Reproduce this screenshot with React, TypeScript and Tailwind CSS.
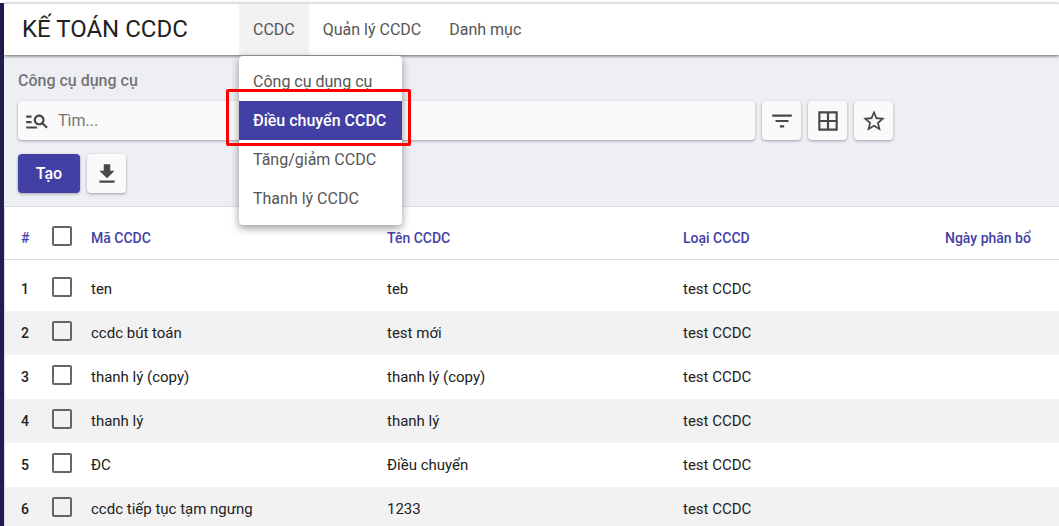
import React from 'react';
import { MdBorderAll, MdDownload, MdFilterList, MdManageSearch, MdStarBorder } from 'react-icons/md';

const menuItems = ['Công cụ dụng cụ', 'Điều chuyển CCDC', 'Tăng/giảm CCDC', 'Thanh lý CCDC'];
const activeItem = 'Điều chuyển CCDC';

const rows = [
  { code: 'ten', name: 'teb', type: 'test CCDC', date: '' },
  { code: 'ccdc bút toán', name: 'test mới', type: 'test CCDC', date: '' },
  { code: 'thanh lý (copy)', name: 'thanh lý (copy)', type: 'test CCDC', date: '' },
  { code: 'thanh lý', name: 'thanh lý', type: 'test CCDC', date: '' },
  { code: 'ĐC', name: 'Điều chuyển', type: 'test CCDC', date: '' },
  { code: 'ccdc tiếp tục tạm ngưng', name: '1233', type: 'test CCDC', date: '' },
];

const raised = 'shadow-[0_1px_3px_rgba(0,0,0,0.35)]';

function Checkbox({ label }: { label: string }) {
  return (
    <input
      type="checkbox"
      aria-label={label}
      className="block size-5 appearance-none rounded-xs border-2 border-[#666] bg-transparent checked:bg-[#4340a5]"
    />
  );
}

function IconButton({ label, children }: { label: string; children: React.ReactNode }) {
  return (
    <button
      type="button"
      aria-label={label}
      className={`flex h-[39px] w-[39px] shrink-0 items-center justify-center rounded bg-[#fafafa] text-[#484848] ${raised}`}
    >
      {children}
    </button>
  );
}

function NavMenu() {
  return (
    <nav className="flex h-full text-base text-[#555]">
      <div className="relative h-full">
        <button type="button" aria-expanded="true" className="h-full bg-[#f2f2f2] px-[14px]">
          CCDC
        </button>
        <ul className="absolute top-full left-0 z-20 mt-px min-w-[163px] rounded bg-white pt-[6px] pb-[7px] whitespace-nowrap shadow-[0_3px_8px_rgba(0,0,0,0.4)]">
          {menuItems.map((item) =>
            item === activeItem ? (
              <li key={item} className="relative">
                <a href="#dieu-chuyen" className="flex h-[39px] items-center bg-[#4340a5] px-[14px] font-medium text-white">
                  {item}
                </a>
                <span className="pointer-events-none absolute -top-3 -right-[9px] -bottom-[6px] -left-[13px] rounded-xs border-3 border-[#ff0000]" />
              </li>
            ) : (
              <li key={item}>
                <a href="#menu" className="flex h-[39px] items-center px-[14px]">
                  {item}
                </a>
              </li>
            ),
          )}
        </ul>
      </div>
      <button type="button" className="h-full px-[14px]">Quản lý CCDC</button>
      <button type="button" className="h-full px-[14px]">Danh mục</button>
    </nav>
  );
}

export default function App() {
  return (
    <div className="flex h-screen flex-col overflow-hidden bg-white pt-[3px] font-[Roboto,sans-serif] text-[#222]">
      <div className="flex min-h-0 flex-1 flex-col border-l-4 border-[#201d50]">
        <header className="relative z-10 flex h-[52px] shrink-0 items-stretch border-t border-t-[#d9d9d9] bg-white shadow-[0_1px_3px_rgba(0,0,0,0.6)]">
          <h1 className="flex w-[235px] shrink-0 items-center pb-[2px] pl-[18px] text-2xl whitespace-nowrap">KẾ TOÁN CCDC</h1>
          <NavMenu />
        </header>

        <section className="shrink-0 bg-[#eeeff5] px-[14px] pt-[14px] pb-[13px]">
          <h2 className="text-base leading-6 font-medium text-[#757575]">Công cụ dụng cụ</h2>
          <div className="mt-2 flex gap-[7px] pr-[152px]">
            <label className={`flex h-[39px] min-w-0 flex-1 items-center gap-2 rounded bg-[#fafafa] pl-[6px] text-[#484848] ${raised}`}>
              <MdManageSearch size={26} className="shrink-0" />
              <input
                type="text"
                aria-label="Tìm"
                placeholder="Tìm..."
                className="min-w-0 flex-1 bg-transparent text-base outline-none placeholder:text-[#757575]"
              />
            </label>
            <IconButton label="Lọc"><MdFilterList size={26} /></IconButton>
            <IconButton label="Nhóm"><MdBorderAll size={26} /></IconButton>
            <IconButton label="Yêu thích"><MdStarBorder size={26} /></IconButton>
          </div>
          <div className="mt-[14px] flex gap-[7px]">
            <button type="button" className={`h-[39px] min-w-[62px] rounded bg-[#4340a5] px-4 text-base font-medium text-white ${raised}`}>
              Tạo
            </button>
            <IconButton label="Tải xuống"><MdDownload size={26} /></IconButton>
          </div>
        </section>

        <main className="min-h-0 flex-1 overflow-hidden border-t border-l border-[#dcdcde]">
          <table className="w-full table-fixed border-collapse text-left text-[15px]">
            <colgroup>
              <col className="w-[42px]" />
              <col className="w-[37px]" />
              <col className="w-[296px]" />
              <col className="w-[296px]" />
              <col className="w-[262px]" />
              <col />
            </colgroup>
            <thead className="text-sm text-[#4340a5]">
              <tr className="h-[52px] border-b border-[#dcdcde]">
                <th className="pt-[10px] pl-4 font-medium">#</th>
                <th className="pt-[7px] pl-[5px]"><Checkbox label="Chọn tất cả" /></th>
                <th className="pt-[10px] pl-[7px] font-medium">Mã CCDC</th>
                <th className="pt-[10px] pl-[7px] font-medium">Tên CCDC</th>
                <th className="pt-[10px] pl-[7px] font-medium">Loại CCCD</th>
                <th className="pt-[10px] pl-[7px] font-medium">Ngày phân bổ</th>
              </tr>
            </thead>
            <tbody>
              <tr aria-hidden="true" className="h-2"><td colSpan={6} /></tr>
              {rows.map((row, i) => (
                <tr key={row.code} className={i % 2 ? 'h-11 bg-[#f2f2f2]' : 'h-11'}>
                  <th scope="row" className="pl-4 text-sm font-medium">{i + 1}</th>
                  <td className="pb-1 pl-[5px]"><Checkbox label={`Chọn ${row.code}`} /></td>
                  <td className="truncate pl-[7px]">{row.code}</td>
                  <td className="truncate pl-[7px]">{row.name}</td>
                  <td className="truncate pl-[7px]">{row.type}</td>
                  <td className="truncate pl-[7px]">{row.date}</td>
                </tr>
              ))}
            </tbody>
          </table>
        </main>
      </div>
    </div>
  );
}
